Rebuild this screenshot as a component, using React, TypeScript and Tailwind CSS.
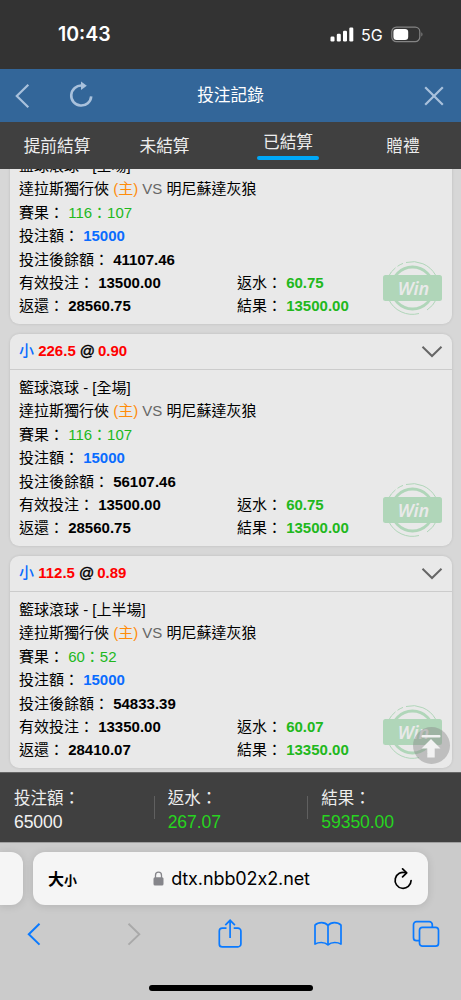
import React from 'react';

type Bet = {
  line?: string;
  odds?: string;
  period: string;
  score: string;
  stake: string;
  balance: string;
  valid: string;
  rebate: string;
  payout: string;
  result: string;
};

const bets: Bet[] = [
  { period: '全場', score: '116：107', stake: '15000', balance: '41107.46', valid: '13500.00', rebate: '60.75', payout: '28560.75', result: '13500.00' },
  { line: '226.5', odds: '0.90', period: '全場', score: '116：107', stake: '15000', balance: '56107.46', valid: '13500.00', rebate: '60.75', payout: '28560.75', result: '13500.00' },
  { line: '112.5', odds: '0.89', period: '上半場', score: '60：52', stake: '15000', balance: '54833.39', valid: '13350.00', rebate: '60.07', payout: '28410.07', result: '13350.00' },
];

const tabs = [
  { label: '提前結算', width: 'w-[114px]' },
  { label: '未結算', width: 'w-[101px]' },
  { label: '已結算', width: 'w-[146px]', active: true },
  { label: '贈禮', width: 'w-[84px]' },
];

const totals = [
  { label: '投注額：', value: '65000', color: 'text-[#f2f2f2]' },
  { label: '返水：', value: '267.07', color: 'text-[#27d41f]' },
  { label: '結果：', value: '59350.00', color: 'text-[#27d41f]' },
];

function StatusBar() {
  return (
    <div className="flex h-[69px] shrink-0 items-center justify-between bg-[#333333] pl-[58px] pr-[38px] text-white">
      <span className="pt-px font-['Inter'] text-[19.5px] font-semibold leading-none">10:43</span>
      <div className="flex items-center">
        <svg width="24" height="15" viewBox="0 0 24 15" fill="#fff">
          <rect x="0.5" y="9.5" width="4" height="5" rx="1.2" />
          <rect x="6.8" y="6.8" width="4" height="7.7" rx="1.2" />
          <rect x="13" y="3.8" width="4" height="10.7" rx="1.2" />
          <rect x="19.3" y="0.5" width="4" height="14" rx="1.2" />
        </svg>
        <span className="ml-[7px] w-[22px] pt-px font-['Inter'] text-[16px] leading-none">5G</span>
        <svg className="ml-2" width="32" height="17" viewBox="0 0 32 17" fill="none">
          <rect x="0.8" y="1.2" width="28" height="14.4" rx="4.6" stroke="#848484" strokeWidth="1.2" />
          <rect x="2.4" y="2.9" width="14.8" height="11" rx="3.2" fill="#fff" />
          <path d="M30.4 6.2c1.4.6 1.4 3.8 0 4.400z" fill="#848484" />
        </svg>
      </div>
    </div>
  );
}

function Header() {
  return (
    <div className="grid h-[53px] shrink-0 grid-cols-[1fr_auto_1fr] items-center bg-[#336699]">
      <div className="flex items-center pl-[14px]">
        <svg width="17" height="26" viewBox="0 0 17 26" fill="none" stroke="#a9c1dc" strokeWidth="2.2">
          <path d="M14.3 1.800 2.800 13l11.500 11.200" />
        </svg>
        <svg className="mb-[3px] ml-[38px]" width="25" height="28" viewBox="0 0 25 28" fill="none">
          <path d="M13 5.600a10 10 0 1 0 9.200 10.700" stroke="#a9c1dc" strokeWidth="2.600" />
          <path d="M12 1.400v8.600l5.800-4.200z" fill="#a9c1dc" />
        </svg>
      </div>
      <h1 className="pt-[2px] text-[16.7px] leading-none text-white">投注記錄</h1>
      <svg className="mr-[17px] justify-self-end" width="20" height="20" viewBox="0 0 20 20" stroke="#a9c1dc" strokeWidth="2.2">
        <path d="M1.200 1.200 18.800 18.800M18.800 1.200 1.200 18.800" />
      </svg>
    </div>
  );
}

function WinStamp() {
  return (
    <svg className="absolute bottom-[9px] right-[9.5px]" width="59" height="54" viewBox="0 0 59 54" fill="none">
      <circle cx="29.5" cy="27" r="21" stroke="#b0d6b9" strokeWidth="2.8" />
      <path d="M5.2 16A26.3 26.3 0 0 1 12.5 6.8M14.5 5.3A26.3 26.3 0 0 1 20 2.4M23 1.5A26.3 26.3 0 0 1 52.5 14" stroke="#b0d6b9" />
      <path d="M5.5 38A26.3 26.3 0 0 0 36 52.5M44 49A26.3 26.3 0 0 0 53.5 38" stroke="#b0d6b9" />
      <rect x="0" y="14" width="59" height="26" rx="2.5" fill="#b0d6b9" />
      <text x="30.5" y="33.5" textAnchor="middle" className="font-['Noto_Sans'] text-[18px] font-semibold italic" fill="#e9e9e9">
        Win
      </text>
    </svg>
  );
}

function BetCard({ bet }: { bet: Bet }) {
  return (
    <div className="relative h-[212px] shrink-0 rounded-[9px] bg-[#e9e9e9] text-[15px] text-black shadow-[0_0_3px_rgba(0,0,0,0.12)]">
      <div className="flex h-9 items-center justify-between border-b border-[#cccccc] pl-[9.5px] pr-[9px]">
        {bet.line && (
          <div className="font-bold">
            <span className="font-medium text-[#0a6cff]">小</span> <span className="text-[#ff0000]">{bet.line}</span>
            <span className="ml-1 mr-[3px] inline-block [-webkit-text-stroke:0.4px_#000] font-normal">@</span>
            <span className="text-[#ff0000]">{bet.odds}</span>
          </div>
        )}
        <svg width="22" height="13" viewBox="0 0 22 13" fill="none" stroke="#666666" strokeWidth="2">
          <path d="M1.500 1.800 11 11l9.500-9.200" />
        </svg>
      </div>
      <div className="px-[9.5px] pt-[6px] leading-[23.4px]">
        <div>籃球滾球 - [{bet.period}]</div>
        <div>
          達拉斯獨行俠 <span className="text-[#ff8c0a]">(主)</span> <span className="text-[#666666]">VS</span> 明尼蘇達灰狼
        </div>
        <div>
          賽果： <span className="text-[#21b81c]">{bet.score}</span>
        </div>
        <div>
          投注額： <b className="text-[#0a6cff]">{bet.stake}</b>
        </div>
        <div>
          投注後餘額： <b>{bet.balance}</b>
        </div>
        <div className="grid grid-cols-[218px_1fr]">
          <div>
            有效投注： <b>{bet.valid}</b>
          </div>
          <div>
            返水： <b className="text-[#21b81c]">{bet.rebate}</b>
          </div>
          <div>
            返還： <b>{bet.payout}</b>
          </div>
          <div>
            結果： <b className="text-[#21b81c]">{bet.result}</b>
          </div>
        </div>
      </div>
      <WinStamp />
    </div>
  );
}

function BrowserBar() {
  return (
    <div className="flex flex-1 flex-col border-t border-[#a0a0a0] bg-[#cbcbcb]">
      <div className="mt-[9px] flex h-[53px] gap-[10px]">
        <div className="w-[23px] rounded-r-[12px] bg-[#f5f5f5] shadow-[0_1px_8px_rgba(0,0,0,0.12)]" />
        <div className="flex w-[395px] items-center justify-between rounded-[12px] bg-[#f5f5f5] pl-[15px] pr-[15px] text-black shadow-[0_1px_8px_rgba(0,0,0,0.12)]">
          <div className="flex w-[34px] items-baseline pt-[2px] font-bold leading-none">
            <span className="text-[16px]">大</span>
            <span className="text-[13px]">小</span>
          </div>
          <div className="flex items-center gap-[7px] pl-[2px]">
            <svg width="11" height="15" viewBox="0 0 11 15" fill="none">
              <path d="M2.500 7V4.200a3 3 0 0 1 6 0V7" stroke="#85858a" strokeWidth="1.300" />
              <rect x="0.500" y="6.300" width="10" height="8.300" rx="1.500" fill="#85858a" />
            </svg>
            <span className="font-['Inter'] text-[18px] leading-none tracking-[-0.1px] [font-feature-settings:'calt'_0]">dtx.nbb02x2.net</span>
          </div>
          <div className="flex w-[34px] justify-end">
            <svg width="20" height="22" viewBox="0 0 20 22" fill="none" stroke="#000" strokeWidth="1.700">
              <path d="M12.800 4.800A8 8 0 1 0 18.100 12.500" strokeLinecap="round" />
              <path d="M9.600 0.900 13.700 4.900 9.600 8.900" strokeLinecap="round" strokeLinejoin="round" />
            </svg>
          </div>
        </div>
      </div>
      <div className="mt-[13px] flex items-center justify-between pl-[20px] pr-[21px] text-[#0a7aff]">
        <svg width="28" height="32" viewBox="0 0 28 32" fill="none" stroke="currentColor" strokeWidth="2">
          <path d="M19.500 5.800 8.800 16.200l10.700 10.400" />
        </svg>
        <svg className="text-[#a9a9a9]" width="28" height="32" viewBox="0 0 28 32" fill="none" stroke="currentColor" strokeWidth="1.900">
          <path d="M10.500 5.800 21.300 16.200 10.500 26.600" />
        </svg>
        <svg width="28" height="32" viewBox="0 0 28 32" fill="none" stroke="currentColor" strokeWidth="1.700">
          <path d="M10.500 10.100H6.300a3 3 0 0 0-3 3v12.800a3 3 0 0 0 3 3h15.600a3 3 0 0 0 3-3V13.100a3 3 0 0 0-3-3h-4.200" />
          <path d="M14.100 20V2.500M9.300 7.100l4.800-4.800 4.800 4.800" />
        </svg>
        <svg width="28" height="32" viewBox="0 0 28 32" fill="none" stroke="currentColor" strokeWidth="1.700" strokeLinejoin="round">
          <path d="M14 7.500v19.300M14 7.500C12.500 5.600 10.300 4.600 7.600 4.600c-2.800 0-5 .9-6.600 2.600v18.900c1.600-1 3.800-1.600 6.300-1.600 2.700 0 5 .8 6.700 2.300 1.700-1.500 4-2.300 6.700-2.300 2.500 0 4.700.6 6.300 1.600V7.200c-1.600-1.700-3.800-2.600-6.600-2.600-2.700 0-4.900 1-6.400 2.900z" />
        </svg>
        <svg width="28" height="32" viewBox="0 0 28 32" fill="none" stroke="currentColor" strokeWidth="1.700">
          <rect x="7.500" y="9.300" width="19" height="18.900" rx="3" />
          <path d="M20.300 9.300V6.700a3 3 0 0 0-3-3H4.500a3 3 0 0 0-3 3v13a3 3 0 0 0 3 3h3" />
        </svg>
      </div>
      <div className="mb-[9px] ml-[149px] mt-auto h-[6px] w-[164px] rounded-full bg-black" />
    </div>
  );
}

export default function App() {
  return (
    <div
      lang="zh-Hant"
      className="flex h-[1000px] w-[461px] flex-col overflow-hidden bg-[#d7d7d7] font-['Liberation_Sans','Noto_Sans_CJK_TC',sans-serif]"
    >
      <StatusBar />
      <Header />
      <div className="flex h-[47px] shrink-0 bg-[#404040] text-[16.7px] leading-none text-[#ededed]">
        {tabs.map((tab) => (
          <div key={tab.label} className={`${tab.width} flex justify-center`}>
            {tab.active ? (
              <div className="flex h-[38px] w-[62px] flex-col items-center justify-between pt-[13px]">
                <span>{tab.label}</span>
                <div className="h-1 w-full rounded-full bg-[#00a8f8]" />
              </div>
            ) : (
              <span className="pt-[17px]">{tab.label}</span>
            )}
          </div>
        ))}
      </div>

      <div className="relative flex h-[603px] shrink-0 flex-col justify-end gap-[10px] overflow-hidden px-[9.5px] pb-[4px]">
        {bets.map((bet) => (
          <BetCard key={bet.balance} bet={bet} />
        ))}
        {/* back to top */}
        <div className="absolute bottom-[8px] right-[11.5px] flex size-[37px] items-center justify-center rounded-full bg-[#8a8a8a]/45">
          <svg width="20" height="24" viewBox="0 0 20 24" fill="#f2f2f2">
            <rect x="0.500" y="1" width="19" height="2.500" rx="1" />
            <path d="M10 5 19.500 14.500H13.700V23.500H6.300V14.500H0.500z" />
          </svg>
        </div>
      </div>

      <div className="grid h-[70px] shrink-0 grid-cols-3 border-t border-[#666666] bg-[#404040]">
        {totals.map((total, i) => (
          <div key={total.label} className="flex items-center">
            <div className={`h-[23px] w-px ${i > 0 ? 'bg-[#606060]' : 'bg-transparent'}`} />
            <div className="pl-[13px] pt-[4px]">
              <div className="text-[16.5px] leading-6 text-[#ededed]">{total.label}</div>
              <div className={`text-[17.6px] leading-6 tracking-[-0.1px] ${total.color}`}>{total.value}</div>
            </div>
          </div>
        ))}
      </div>
      <BrowserBar />
    </div>
  );
}
